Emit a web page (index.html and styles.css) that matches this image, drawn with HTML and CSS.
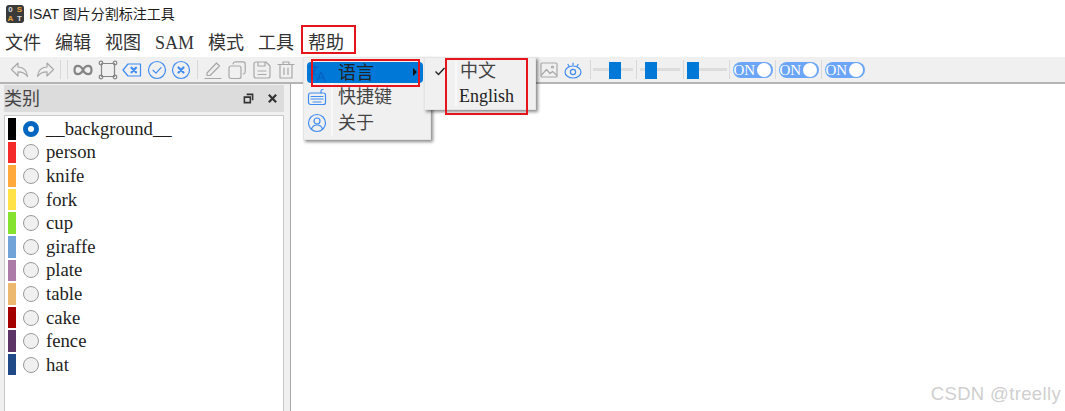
FILE: index.html
```html
<!DOCTYPE html>
<html lang="zh">
<head>
<meta charset="utf-8">
<title>ISAT 图片分割标注工具</title>
<link rel="stylesheet" href="styles.css">
</head>
<body>
<div class="window">
  <header class="titlebar">
    <div class="logo"><span>0</span><span class="s">S</span><span class="a">A</span><span>T</span></div>
    <span class="title">ISAT 图片分割标注工具</span>
  </header>
  <nav class="menubar">
    <span>文件</span><span>编辑</span><span>视图</span><span>SAM</span><span>模式</span><span>工具</span><span>帮助</span>
  </nav>
  <div class="toolbar">
    <span class="tool"><svg viewBox="0 0 20 20" class="ic grey"><path d="M8 3 1.500 9.500 8 16v-4.200c4 0 7 1 9.500 4.700C17 10.500 13.500 7.300 8 7z"/></svg></span>
    <span class="tool"><svg viewBox="0 0 20 20" class="ic grey"><path d="M12 3l6.500 6.500L12 16v-4.200c-4 0-7 1-9.500 4.700C3 10.500 6.500 7.300 12 7z"/></svg></span>
    <i class="sep"></i><i class="sep"></i>
    <span class="tool"><svg viewBox="0 0 20 20" class="ic dark thick"><path d="M10 10C7.500 4.500 1.500 4.500 1.500 10S7.500 15.500 10 10s8.500-5.500 8.500 0-6 5.500-8.500 0z"/></svg></span>
    <span class="tool"><svg viewBox="0 0 20 20" class="ic dark"><path d="M3.500 3.500h13v13h-13z"/><circle cx="3" cy="3" r="1.800"/><circle cx="17" cy="3" r="1.800"/><circle cx="3" cy="17" r="1.800"/><circle cx="17" cy="17" r="1.800"/></svg></span>
    <span class="tool"><svg viewBox="0 0 20 20" class="ic blue"><path d="M6 4h12.500v12H6L1 10z"/><path class="thick" d="M9.500 7.700l4.500 4.600M14 7.700l-4.500 4.600"/></svg></span>
    <span class="tool"><svg viewBox="0 0 20 20" class="ic blue"><circle cx="10" cy="10" r="8.500"/><path d="M6 10.300l3 2.800 5-5.400"/></svg></span>
    <span class="tool"><svg viewBox="0 0 20 20" class="ic blue"><circle cx="10" cy="10" r="8.500"/><path class="thick" d="M7.500 7.500l5 5M12.500 7.500l-5 5"/></svg></span>
    <i class="sep"></i>
    <span class="tool"><svg viewBox="0 0 20 20" class="ic grey"><path d="M4 13 13.500 3l3 3L7 15.500H4zM2 18.500h16"/></svg></span>
    <span class="tool"><svg viewBox="0 0 20 20" class="ic grey"><rect x="2" y="6" width="12" height="12.500" rx="2"/><path d="M6 3.800q.3-2 2.300-2H16q2.200 0 2.200 2.200v7.700q0 2-2 2.300"/></svg></span>
    <span class="tool"><svg viewBox="0 0 20 20" class="ic grey"><path d="M4 2h10l4 4v10q0 2-2 2H4q-2 0-2-2V4q0-2 2-2zM6 2v4h7V2M6 11h8M6 14.500h8"/></svg></span>
    <span class="tool"><svg viewBox="0 0 20 20" class="ic grey"><path d="M2 4.500h16M7 4.500V2h6v2.500M4 4.500V18h12V4.500M8 8v6.500M12 8v6.500"/></svg></span>
    <span class="tool-gap"></span>
    <span class="tool"><svg viewBox="0 0 20 20" class="ic grey"><rect x="2" y="3" width="16" height="14" rx="1"/><path d="M2.500 15 7.500 9.500l3.500 4 2.500-2 4 3.500"/><circle cx="13.500" cy="7" r="1"/></svg></span>
    <span class="tool"><svg viewBox="0 0 20 20" class="ic blue"><ellipse cx="10" cy="12" rx="8" ry="6"/><circle cx="10" cy="12" r="2.600"/><path d="M5 4.500l1 1.800M10 3v2M15 4.500l-1 1.800"/></svg></span>
    <i class="sep first"></i>
    <span class="slider s1"><b></b></span><i class="sep"></i>
    <span class="slider s2"><b></b></span><i class="sep"></i>
    <span class="slider s3"><b></b></span><i class="sep narrow"></i>
    <span class="switch">ON<b></b></span><i class="sep narrow"></i>
    <span class="switch">ON<b></b></span><i class="sep narrow"></i>
    <span class="switch">ON<b></b></span>
  </div>
  <main class="main">
    <aside class="dock">
      <div class="dock-head">
        <span class="dock-title">类别</span>
        <svg viewBox="0 0 12 12" class="dock-btn"><path d="M4 1.500h6.500V8M1.500 4.500h6.500v6H1.500z"/></svg>
        <svg viewBox="0 0 12 12" class="dock-btn close"><path d="M2 2l8 8M10 2l-8 8"/></svg>
      </div>
      <ul class="labels">
        <li><i class="swatch c1"></i><i class="radio on"></i><span>__background__</span></li>
        <li><i class="swatch c2"></i><i class="radio"></i><span>person</span></li>
        <li><i class="swatch c3"></i><i class="radio"></i><span>knife</span></li>
        <li><i class="swatch c4"></i><i class="radio"></i><span>fork</span></li>
        <li><i class="swatch c5"></i><i class="radio"></i><span>cup</span></li>
        <li><i class="swatch c6"></i><i class="radio"></i><span>giraffe</span></li>
        <li><i class="swatch c7"></i><i class="radio"></i><span>plate</span></li>
        <li><i class="swatch c8"></i><i class="radio"></i><span>table</span></li>
        <li><i class="swatch c9"></i><i class="radio"></i><span>cake</span></li>
        <li><i class="swatch c10"></i><i class="radio"></i><span>fence</span></li>
        <li><i class="swatch c11"></i><i class="radio"></i><span>hat</span></li>
      </ul>
    </aside>
    <div class="canvas"></div>
  </main>

  <div class="menu help-menu">
    <div class="menu-row active">
      <span class="menu-icon"><svg viewBox="0 0 20 20" class="ic lang"><path d="M2 4h9M6 2v2M9 4c-1 4-3 6-6 8M4 7c1 2 3 4 5 5M10 18l4-9 4 9M11.500 15h5"/></svg></span>
      <span class="menu-text">语言</span><i class="arrow"></i>
    </div>
    <div class="menu-row">
      <span class="menu-icon"><svg viewBox="0 0 20 20" class="ic blue"><rect x="1.500" y="6" width="17" height="11.500" rx="2"/><path d="M4 9.500h12M4 12h12M6 15h8M14 6V4q0-1.500 2-1.500"/></svg></span>
      <span class="menu-text">快捷键</span>
    </div>
    <div class="menu-row">
      <span class="menu-icon"><svg viewBox="0 0 20 20" class="ic blue"><circle cx="10" cy="10" r="8.500"/><circle cx="10" cy="8" r="3"/><path d="M4.500 16c1-3 3-4 5.500-4s4.500 1 5.500 4"/></svg></span>
      <span class="menu-text">关于</span>
    </div>
  </div>
  <div class="menu lang-menu">
    <div class="menu-row"><span class="menu-icon wide"><svg viewBox="0 0 12 12" class="check"><path d="M1.500 6.500 4.500 9.500 10.500 3"/></svg></span><span class="menu-text">中文</span></div>
    <div class="menu-row"><span class="menu-icon wide"></span><span class="menu-text en">English</span></div>
  </div>

  <i class="mark mark-help"></i>
  <i class="mark mark-lang"></i>
  <i class="mark mark-sub"></i>
  <span class="watermark">CSDN @treelly</span>
</div>
</body>
</html>
```
FILE: styles.css
```css
* { box-sizing: border-box; }
html, body { margin: 0; padding: 0; background: #fff; }
.window {
  position: relative;
  width: 1065px;
  height: 411px;
  overflow: hidden;
  display: flex;
  flex-direction: column;
  font-family: "Liberation Serif", "Noto Sans CJK SC", serif;
  color: #222;
}
.titlebar {
  height: 28px;
  display: flex;
  align-items: center;
  padding-left: 6px;
  gap: 5px;
  flex: none;
}
.logo {
  width: 18px;
  height: 18px;
  border-radius: 3px;
  background: #3a3a3a;
  display: grid;
  grid-template-columns: 1fr 1fr;
  font: bold 8px/9px "Liberation Sans", sans-serif;
  text-align: center;
  color: #ddd;
}
.logo .s { color: #e8a33d; }
.logo .a { color: #e8a33d; }
.title {
  font: 14px/18px "Liberation Sans", "Noto Sans CJK SC", sans-serif;
  color: #1c1c1c;
}
.menubar {
  height: 29px;
  flex: none;
  display: flex;
  align-items: center;
  padding-left: 5px;
  gap: 14px;
  font-size: 18px;
  line-height: 18px;
  color: #333;
}
.toolbar {
  height: 27px;
  flex: none;
  display: flex;
  align-items: center;
  padding-left: 8px;
  background: #f0f0f0;
  border-bottom: 2px solid #b4b4b4;
}
.tool {
  width: 24.500px;
  height: 24px;
  flex: none;
  display: flex;
  align-items: center;
  justify-content: center;
}
.tool-gap { width: 238px; flex: none; }
.ic {
  width: 20px;
  height: 20px;
  fill: none;
  stroke-width: 1.200;
  stroke-linejoin: round;
  stroke-linecap: round;
}
.grey { stroke: #a8a8a8; }
.dark { stroke: #858585; }
.blue { stroke: #3f8cf2; }
.lang { stroke: #0a5fc0; }
.thick { stroke-width: 2.200; }
.sep {
  width: 1px;
  height: 19px;
  margin: 0 3px;
  flex: none;
  background: #d8d8d8;
}
.sep.narrow { margin: 0 2.500px; }
.sep.first { margin-left: 4px; margin-right: 2px; }
.slider {
  position: relative;
  width: 40px;
  height: 18px;
  flex: none;
  display: flex;
  align-items: center;
}
.slider::before {
  content: "";
  flex: 1;
  height: 3px;
  background: #dcdcdc;
}
.slider b {
  position: absolute;
  top: 1px;
  width: 12px;
  height: 17px;
  background: #0078d7;
}
.s1 b { left: 16px; }
.s2 b { left: 5px; }
.s3 b { left: 0; }
.switch {
  width: 40px;
  height: 16px;
  flex: none;
  padding: 0 2px 0 1px;
  display: flex;
  align-items: center;
  justify-content: space-between;
  border-radius: 8px;
  background: #6aa5f7;
  color: #fff;
  font-size: 15px;
  line-height: 16px;
}
.switch b {
  width: 14px;
  height: 14px;
  border-radius: 50%;
  background: #fff;
}
.main {
  flex: 1;
  display: flex;
  min-height: 0;
  background: #f0f0f0;
}
.dock {
  width: 290px;
  flex: none;
  padding: 1px 6px 0 4px;
  display: flex;
  flex-direction: column;
}
.dock-head {
  height: 27px;
  flex: none;
  display: flex;
  align-items: center;
  background: #dcdcdc;
  font-size: 18px;
  line-height: 18px;
  color: #444;
  padding-right: 6px;
}
.dock-title { flex: 1; }
.dock-btn {
  width: 11px;
  height: 11px;
  margin-left: 13px;
  fill: none;
  stroke: #333;
  stroke-width: 1.700;
}
.dock-btn.close { stroke-width: 2.400; }
.labels {
  flex: 1;
  list-style: none;
  margin: 3px 0 0;
  padding: 1px 0 0 3px;
  background: #fff;
  border: 1px solid #c8c8c8;
  border-bottom: 0;
}
.labels li {
  height: 23.600px;
  display: flex;
  align-items: center;
  font-size: 18.700px;
  color: #1e1e1e;
}
.swatch {
  width: 8px;
  height: 21.500px;
  flex: none;
}
.c1 { background: #000; }
.c2 { background: #f42a2a; }
.c3 { background: #ffa83c; }
.c4 { background: #ffe24a; }
.c5 { background: #85e32f; }
.c6 { background: #72a3d8; }
.c7 { background: #ad7ba8; }
.c8 { background: #ecb76e; }
.c9 { background: #a40000; }
.c10 { background: #5c3566; }
.c11 { background: #204a87; }
.radio {
  width: 16px;
  height: 16px;
  margin: 0 7px;
  flex: none;
  border-radius: 50%;
  border: 1.500px solid #9a9a9a;
  background: #f0f0f0;
}
.radio.on {
  border: 5px solid #0067c0;
  background: #fff;
}
.canvas {
  flex: 1;
  background: #fff;
  border-left: 1px solid #a8a8a8;
}
.menu {
  position: absolute;
  top: 57px;
  background: #f0f0f0;
  box-shadow: 2px 2px 3px rgba(0, 0, 0, .45);
  border: 1px solid #e4e4e4;
  padding: 4px 0;
  font-size: 18px;
  line-height: 18px;
  color: #444;
}
.menu::before {
  content: "";
  position: absolute;
  top: 3px;
  bottom: 3px;
  width: 2px;
  background: #f8f8f8;
}
.help-menu::before { left: 27px; }
.lang-menu::before { left: 30px; }
.help-menu { left: 303px; width: 128px; height: 83px; padding-left: 3px; padding-right: 7px; }
.lang-menu { left: 424px; width: 112px; height: 53px; padding-top: 1px; }
.menu-row {
  position: relative;
  height: 26px;
  display: flex;
  align-items: center;
}
.lang-menu .menu-row { height: 24.500px; }
.menu-row.active {
  height: 21px;
  margin-bottom: 1px;
  background: #0078d7;
  border-radius: 4px;
  color: #222;
}
.menu-icon {
  width: 20px;
  flex: none;
  display: flex;
  justify-content: center;
  margin-right: 11px;
}
.menu-icon .ic { flex: none; }
.menu-icon.wide { width: 29px; margin-right: 6px; }
.menu-text { white-space: nowrap; }
.menu-text.en { margin-left: -1px; color: #222; }
.arrow {
  position: absolute;
  right: 6px;
  top: 6px;
  border-left: 4px solid #111;
  border-top: 4px solid transparent;
  border-bottom: 4px solid transparent;
}
.check {
  width: 12px;
  height: 12px;
  fill: none;
  stroke: #222;
  stroke-width: 1.400;
}
.mark {
  position: absolute;
  border: 2px solid #e8141c;
}
.mark-help { left: 301px; top: 25px; width: 55px; height: 29px; }
.mark-lang { left: 311px; top: 59px; width: 109px; height: 28px; }
.mark-sub { left: 445px; top: 58px; width: 83px; height: 57px; }
.watermark {
  position: absolute;
  right: 4px;
  top: 384px;
  font: 18.500px/20px "Liberation Sans", sans-serif;
  color: #cfcfcf;
  letter-spacing: .35px;
}
```
